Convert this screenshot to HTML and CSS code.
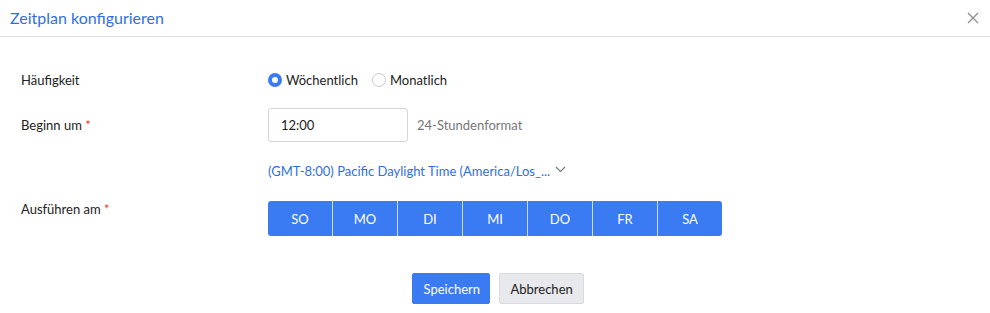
FILE: index.html
```html
<!DOCTYPE html>
<html lang="de">
<head>
<meta charset="utf-8">
<link rel="stylesheet" href="styles.css">
</head>
<body>
<div class="dialog">
  <div class="header">
    <h1 class="title">Zeitplan konfigurieren</h1>
    <button class="close" aria-label="Schließen">
      <svg width="12" height="12" viewBox="0 0 12 12"><path d="M1 1L11 11M11 1L1 11" stroke="#8f8f8f" stroke-width="1.3" fill="none"/></svg>
    </button>
  </div>
  <div class="form">
    <div class="row row-freq">
      <div class="label">Häufigkeit</div>
      <div class="field radios">
        <label class="radio"><span class="dot checked"></span>Wöchentlich</label>
        <label class="radio"><span class="dot"></span>Monatlich</label>
      </div>
    </div>
    <div class="row row-time">
      <div class="label">Beginn um <span class="req">*</span></div>
      <div class="field">
        <div class="input">12:00</div>
        <span class="hint">24-Stundenformat</span>
      </div>
    </div>
    <div class="row row-tz">
      <div class="label"></div>
      <div class="field tz">
        <span>(GMT-8:00) Pacific Daylight Time (America/Los_...</span>
        <svg width="11" height="7" viewBox="0 0 11 7"><path d="M1 1L5.5 5.5L10 1" stroke="#777" stroke-width="1.1" fill="none"/></svg>
      </div>
    </div>
    <div class="row row-days">
      <div class="label">Ausführen am <span class="req">*</span></div>
      <div class="field">
        <div class="days">
          <button class="day">SO</button><button class="day">MO</button><button class="day">DI</button><button class="day">MI</button><button class="day">DO</button><button class="day">FR</button><button class="day">SA</button>
        </div>
      </div>
    </div>
  </div>
  <div class="footer">
    <button class="btn primary">Speichern</button>
    <button class="btn secondary">Abbrechen</button>
  </div>
</div>
</body>
</html>
```
FILE: styles.css
```css
* { box-sizing: border-box; }
body {
  margin: 0;
  font-family: Lato, "Open Sans", sans-serif;
  font-size: 13px;
  color: #222;
  background: #fff;
}
.header {
  height: 37px;
  border-bottom: 1px solid #dcdce3;
  display: flex;
  align-items: center;
  justify-content: space-between;
  padding: 0 10px 1px 10px;
}
.title {
  margin: 0;
  font-size: 16px;
  font-weight: 400;
  color: #2f6fdf;
}
.close {
  border: 0;
  background: none;
  padding: 0;
  width: 12px;
  height: 12px;
  margin-right: 1px;
  display: flex;
}
.form {
  padding: 33px 0 0 21px;
  display: flex;
  flex-direction: column;
}
.row {
  display: grid;
  grid-template-columns: 247px 1fr;
  align-items: center;
}
.label { line-height: 16px; }
.req { color: #e53935; }
.field { display: flex; align-items: center; }
.row-freq { height: 20px; }
.row-time { margin-top: 18px; height: 34px; }
.row-tz { margin-top: 21px; height: 16px; }
.row-days { margin-top: 22px; align-items: start; }
.radio {
  display: flex;
  align-items: center;
  margin-right: 14px;
}
.dot {
  width: 14px;
  height: 14px;
  border-radius: 50%;
  border: 1px solid #c9c9c9;
  margin-right: 4px;
  background: #fff;
}
.dot.checked {
  border: 4px solid #3a7af3;
}
.input {
  width: 140px;
  height: 34px;
  border: 1px solid #d6d6d6;
  border-radius: 3px;
  padding-left: 12px;
  display: flex;
  align-items: center;
  color: #222;
}
.hint {
  margin-left: 9px;
  color: #777;
}
.tz { color: #2f6fdf; }
.tz svg { margin-left: 5px; margin-top: -3px; }
.days {
  display: flex;
  border-radius: 3px;
  overflow: hidden;
}
.day {
  width: 65px;
  height: 35px;
  border: 0;
  border-left: 1px solid #c9dafb;
  background: #3a7af3;
  color: #fff;
  font-family: inherit;
  font-size: 13px;
  padding: 0;
}
.day:first-child { border-left: 0; width: 64px; }
.footer {
  margin-top: 37px;
  display: flex;
  justify-content: center;
  gap: 9px;
  padding-left: 5px;
}
.btn {
  height: 31px;
  border-radius: 2px;
  font-family: inherit;
  font-size: 13px;
  padding: 0 11px;
}
.primary {
  background: #3a7af3;
  color: #fff;
  border: 1px solid #3a7af3;
  width: 78px;
}
.secondary {
  background: #e8e9ec;
  color: #222;
  border: 1px solid #d9dade;
  width: 85px;
}
```
